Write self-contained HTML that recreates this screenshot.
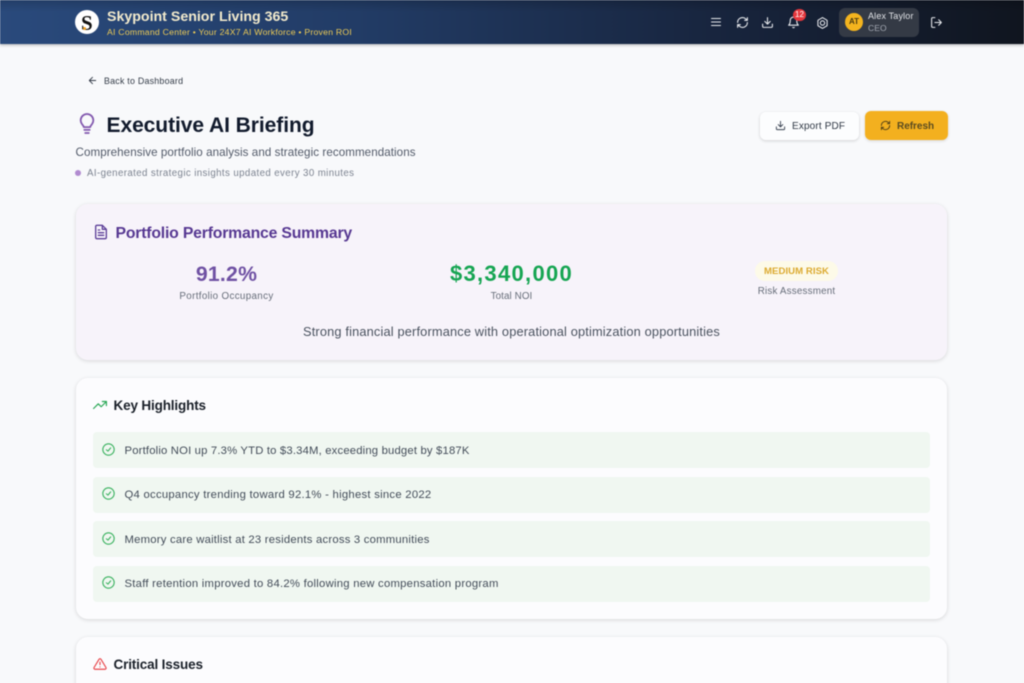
<!DOCTYPE html>
<html lang="en"><head><meta charset="utf-8"><title>Executive AI Briefing</title>
<style>
*{box-sizing:border-box;margin:0;padding:0}
html,body{width:1024px;height:683px;overflow:hidden;background:#f8f9fb}
body{font-family:"Liberation Sans",sans-serif;position:relative}
#p{position:absolute;inset:0;filter:blur(.45px)}
.t{position:absolute;white-space:nowrap;line-height:1}
.c{transform:translateX(-50%)}
svg{position:absolute;fill:none;stroke-linecap:round;stroke-linejoin:round}
.hd{position:absolute;left:0;top:0;width:1024px;height:44px;background:linear-gradient(180deg,rgba(0,0,0,.16) 0,rgba(0,0,0,0) 12px),linear-gradient(90deg,#2a4a7c 0%,#223c66 35%,#18253e 70%,#10151f 100%);box-shadow:0 1px 3px rgba(0,0,0,.3)}
.w{stroke:#e6e8ec;stroke-width:2}
.card{position:absolute;left:76px;width:871px;background:#fcfcfe;border-radius:12px;box-shadow:0 1px 4px rgba(0,0,0,.14)}
.row{position:absolute;left:93px;width:837px;height:36px;background:#f0f7f1;border-radius:4px}
.rt{position:absolute;left:124.5px;font-size:11.3px;color:#434c59;white-space:nowrap;line-height:1}
.ck{stroke:#3bb260;stroke-width:2}
</style></head><body><div id="p">
<div class="hd"></div>
<div style="position:absolute;left:75px;top:10px;width:24px;height:24px;border-radius:50%;background:#fff"></div>
<div class="t" style="left:81px;top:11px;font:700 21px 'Liberation Serif',serif;color:#111">S</div>
<div style="position:absolute;left:83px;top:27px;width:3px;height:3px;border-radius:50%;background:#f0a020"></div>
<div class="t" style="left:107px;top:10px;font-size:14.2px;font-weight:700;letter-spacing:0;color:#f3ebcd">Skypoint Senior Living 365</div>
<div class="t" style="left:107px;top:28px;font-size:8.7px;letter-spacing:.23px;color:#ecca55">AI Command Center • Your 24X7 AI Workforce • Proven ROI</div>

<svg class="w" style="left:710px;top:16px" width="12" height="12" viewBox="0 0 24 24"><path d="M3 5h18M3 12h18M3 19h18"/></svg>
<svg class="w" style="left:736px;top:16px" width="13" height="13" viewBox="0 0 24 24"><path d="M3 12a9 9 0 0 1 15-6.700L21 8M21 3v5h-5M21 12a9 9 0 0 1-15 6.700L3 16M3 21v-5h5"/></svg>
<svg class="w" style="left:761px;top:16px" width="13" height="13" viewBox="0 0 24 24"><path d="M3 15v4a2 2 0 0 0 2 2h14a2 2 0 0 0 2-2v-4M7 10l5 5 5-5M12 15V3"/></svg>
<svg class="w" style="left:787px;top:16px" width="13" height="13" viewBox="0 0 24 24"><path d="M6 8a6 6 0 0 1 12 0c0 7 3 9 3 9H3s3-2 3-9M10.500 21a2 2 0 0 0 3 0"/></svg>
<div style="position:absolute;left:793px;top:9px;width:13px;height:12px;border-radius:6px;background:#e5373d"></div>
<div class="t c" style="left:799.500px;top:11px;font-size:8px;color:#fff">12</div>
<svg class="w" style="left:815.500px;top:15.500px" width="13" height="14" viewBox="0 0 24 24"><path d="M12 2l8.500 5v10L12 22l-8.500-5V7z" stroke-dasharray="4 1"/><circle cx="12" cy="12" r="4"/></svg>
<div style="position:absolute;left:839px;top:8px;width:80px;height:29px;border-radius:6px;background:#343a45"></div>
<div style="position:absolute;left:845px;top:13px;width:18px;height:18px;border-radius:50%;background:#f4b41e"></div>
<div class="t c" style="left:854px;top:18px;font-size:8px;font-weight:700;color:#4a3a10">AT</div>
<div class="t" style="left:868px;top:12px;font-size:9px;letter-spacing:.16px;color:#e1e3e7">Alex Taylor</div>
<div class="t" style="left:868px;top:24px;font-size:8.500px;letter-spacing:.1px;color:#a3a8b2">CEO</div>
<svg class="w" style="left:930px;top:16px" width="13" height="13" viewBox="0 0 24 24"><path d="M9 21H5a2 2 0 0 1-2-2V5a2 2 0 0 1 2-2h4M16 17l5-5-5-5M21 12H9"/></svg>

<svg style="left:87px;top:75px;stroke:#333b48;stroke-width:2" width="11" height="11" viewBox="0 0 24 24"><path d="M19 12H5M12 19l-7-7 7-7"/></svg>
<div class="t" style="left:104px;top:76.500px;font-size:8.900px;letter-spacing:.22px;color:#343c48">Back to Dashboard</div>

<svg style="left:78px;top:113px;stroke:#8258ae;stroke-width:2" width="18" height="22" viewBox="0 0 20 24"><path d="M6.500 15.500c-.3-1.400-1-2.200-2-3.300A7 7 0 1 1 15.500 12.200c-1 1.100-1.700 1.900-2 3.300zM7 18.500h6M8 22h4"/></svg>
<div class="t" style="left:106.500px;top:114.500px;font-size:21px;font-weight:700;letter-spacing:-.06px;color:#111a2c">Executive AI Briefing</div>
<div class="t" style="left:75.500px;top:147px;font-size:11.600px;letter-spacing:.07px;color:#525a69">Comprehensive portfolio analysis and strategic recommendations</div>
<div style="position:absolute;left:75px;top:170px;width:6px;height:6px;border-radius:50%;background:#b18bd0"></div>
<div class="t" style="left:87px;top:169px;font-size:9.700px;letter-spacing:.4px;color:#7c8390">AI-generated strategic insights updated every 30 minutes</div>

<div style="position:absolute;left:760px;top:112px;width:99px;height:28px;background:#fcfdfe;border-radius:6px;box-shadow:0 1px 3px rgba(0,0,0,.16)"></div>
<svg style="left:775px;top:120px;stroke:#384150;stroke-width:2" width="11" height="11" viewBox="0 0 24 24"><path d="M3 15v4a2 2 0 0 0 2 2h14a2 2 0 0 0 2-2v-4M7 10l5 5 5-5M12 15V3"/></svg>
<div class="t" style="left:792px;top:122px;font-size:10px;letter-spacing:.15px;color:#2e3744">Export PDF</div>
<div style="position:absolute;left:865px;top:111px;width:83px;height:29px;background:#f3b01f;border-radius:6px;box-shadow:0 1px 3px rgba(0,0,0,.14)"></div>
<svg style="left:880px;top:120px;stroke:#4b3c17;stroke-width:2" width="11" height="11" viewBox="0 0 24 24"><path d="M3 12a9 9 0 0 1 15-6.700L21 8M21 3v5h-5M21 12a9 9 0 0 1-15 6.700L3 16M3 21v-5h5"/></svg>
<div class="t" style="left:897px;top:122px;font-size:10px;font-weight:700;letter-spacing:-.02px;color:#5a4b20">Refresh</div>

<div class="card" style="top:204px;height:156px;background:#f7f3fa"></div>
<svg style="left:94px;top:224px;stroke:#5d3f98;stroke-width:2" width="14" height="16" viewBox="0 0 20 24"><path d="M12 2H4a2 2 0 0 0-2 2v16a2 2 0 0 0 2 2h12a2 2 0 0 0 2-2V8zM12 2v6h6M6 13h8M6 17h8M6 9h2"/></svg>
<div class="t" style="left:115.500px;top:225.800px;font-size:15.800px;font-weight:700;letter-spacing:-.2px;color:#573892">Portfolio Performance Summary</div>
<div class="t c" style="left:226.500px;top:263.500px;font-size:21.200px;font-weight:700;letter-spacing:.25px;color:#6f51a3">91.2%</div>
<div class="t c" style="left:226.500px;top:292px;font-size:9.800px;letter-spacing:.34px;color:#666d79">Portfolio Occupancy</div>
<div class="t c" style="left:511.500px;top:263px;font-size:22px;font-weight:700;letter-spacing:1.3px;color:#16a552">$3,340,000</div>
<div class="t c" style="left:511.500px;top:292px;font-size:9.800px;letter-spacing:.1px;color:#666d79">Total NOI</div>
<div style="position:absolute;left:755px;top:261px;width:83px;height:20px;border-radius:10px;background:#fdfae8"></div>
<div class="t c" style="left:796.500px;top:266.500px;font-size:9.600px;font-weight:700;letter-spacing:.05px;color:#dcaa30">MEDIUM RISK</div>
<div class="t c" style="left:796.500px;top:286.500px;font-size:9.800px;letter-spacing:.2px;color:#666d79">Risk Assessment</div>
<div class="t c" style="left:511.500px;top:326px;font-size:12.800px;letter-spacing:.16px;color:#4a525f">Strong financial performance with operational optimization opportunities</div>

<div class="card" style="top:378px;height:241px"></div>
<svg style="left:93px;top:398px;stroke:#2aa856;stroke-width:2" width="14" height="14" viewBox="0 0 24 24"><path d="M1 18l8-8 5 5 9-9M16 6h7v7"/></svg>
<div class="t" style="left:113.500px;top:398.500px;font-size:13.500px;font-weight:700;letter-spacing:-.15px;color:#1a2029">Key Highlights</div>

<div class="row" style="top:432px"></div>
<svg class="ck" style="left:102px;top:442.500px" width="13" height="13" viewBox="0 0 24 24"><circle cx="12" cy="12" r="10.500"/><path d="M8 12.500l3 2.500 5-6"/></svg>
<div class="rt" style="top:445.700px;letter-spacing:.17px">Portfolio NOI up 7.3% YTD to $3.34M, exceeding budget by $187K</div>
<div class="row" style="top:477px"></div>
<svg class="ck" style="left:102px;top:487px" width="13" height="13" viewBox="0 0 24 24"><circle cx="12" cy="12" r="10.500"/><path d="M8 12.500l3 2.500 5-6"/></svg>
<div class="rt" style="top:490.200px;letter-spacing:.26px">Q4 occupancy trending toward 92.1% - highest since 2022</div>
<div class="row" style="top:521px"></div>
<svg class="ck" style="left:102px;top:532px" width="13" height="13" viewBox="0 0 24 24"><circle cx="12" cy="12" r="10.500"/><path d="M8 12.500l3 2.500 5-6"/></svg>
<div class="rt" style="top:534.700px;letter-spacing:.22px">Memory care waitlist at 23 residents across 3 communities</div>
<div class="row" style="top:566px"></div>
<svg class="ck" style="left:102px;top:576px" width="13" height="13" viewBox="0 0 24 24"><circle cx="12" cy="12" r="10.500"/><path d="M8 12.500l3 2.500 5-6"/></svg>
<div class="rt" style="top:579.200px;letter-spacing:.25px">Staff retention improved to 84.2% following new compensation program</div>

<div class="card" style="top:637px;height:80px"></div>
<svg style="left:93px;top:657px;stroke:#e8474c;stroke-width:2" width="14" height="14" viewBox="0 0 24 24"><path d="M10.300 3.900L1.800 18a2 2 0 0 0 1.700 3h17a2 2 0 0 0 1.700-3L13.700 3.900a2 2 0 0 0-3.400 0zM12 9v4M12 17h.01"/></svg>
<div class="t" style="left:113.500px;top:657.500px;font-size:13.500px;font-weight:700;letter-spacing:-.15px;color:#1a2029">Critical Issues</div>
</div></body></html>
